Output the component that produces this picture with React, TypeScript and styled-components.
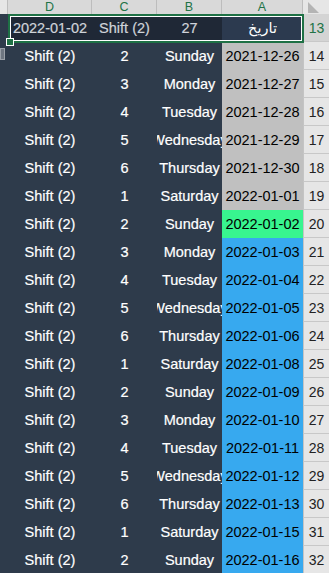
import * as React from 'react';
import styled, { createGlobalStyle } from 'styled-components';

const COLS = '8px 84px 65px 65px 81px 26px';

type Fill = 'past' | 'today' | 'future';

const rows: { n: number; shift: number; day: string; date: string; fill: Fill }[] = [
  { n: 14, shift: 2, day: 'Sunday', date: '2021-12-26', fill: 'past' },
  { n: 15, shift: 3, day: 'Monday', date: '2021-12-27', fill: 'past' },
  { n: 16, shift: 4, day: 'Tuesday', date: '2021-12-28', fill: 'past' },
  { n: 17, shift: 5, day: 'Wednesday', date: '2021-12-29', fill: 'past' },
  { n: 18, shift: 6, day: 'Thursday', date: '2021-12-30', fill: 'past' },
  { n: 19, shift: 1, day: 'Saturday', date: '2022-01-01', fill: 'past' },
  { n: 20, shift: 2, day: 'Sunday', date: '2022-01-02', fill: 'today' },
  { n: 21, shift: 3, day: 'Monday', date: '2022-01-03', fill: 'future' },
  { n: 22, shift: 4, day: 'Tuesday', date: '2022-01-04', fill: 'future' },
  { n: 23, shift: 5, day: 'Wednesday', date: '2022-01-05', fill: 'future' },
  { n: 24, shift: 6, day: 'Thursday', date: '2022-01-06', fill: 'future' },
  { n: 25, shift: 1, day: 'Saturday', date: '2022-01-08', fill: 'future' },
  { n: 26, shift: 2, day: 'Sunday', date: '2022-01-09', fill: 'future' },
  { n: 27, shift: 3, day: 'Monday', date: '2022-01-10', fill: 'future' },
  { n: 28, shift: 4, day: 'Tuesday', date: '2022-01-11', fill: 'future' },
  { n: 29, shift: 5, day: 'Wednesday', date: '2022-01-12', fill: 'future' },
  { n: 30, shift: 6, day: 'Thursday', date: '2022-01-13', fill: 'future' },
  { n: 31, shift: 1, day: 'Saturday', date: '2022-01-15', fill: 'future' },
  { n: 32, shift: 2, day: 'Sunday', date: '2022-01-16', fill: 'future' },
];

const fills: Record<Fill, string> = {
  past: '#c0c0c0',
  today: '#38f58f',
  future: '#37a9ef',
};

export default function App() {
  return (
    <>
      <GlobalStyle />
      <Sheet>
        <HeaderRow>
          <ColHead />
          <ColHead $active>D</ColHead>
          <ColHead $active>C</ColHead>
          <ColHead $active>B</ColHead>
          <ColHead $active>A</ColHead>
          <Corner>
            <svg width="26" height="14" viewBox="0 0 26 14">
              <polygon points="5,2 5,13 16,13" fill="#b4b4b4" />
            </svg>
          </Corner>
        </HeaderRow>

        <Row>
          <Cell />
          <Selection>
            <Cell $bg="#1f2836" $color="#cfd3d9">2022-01-02</Cell>
            <Cell $bg="#1f2836" $color="#cfd3d9">Shift (2)</Cell>
            <Cell $bg="#1f2836" $color="#cfd3d9">27</Cell>
            <Cell $bg="#2c3a4f" $color="#ffffff" $thin>
              تاريخ
            </Cell>
          </Selection>
          <RowNum $active>13</RowNum>
        </Row>

        {rows.map((r, i) => (
          <Row key={r.n}>
            <Cell>{i === 0 && <Marker />}</Cell>
            <Cell>Shift (2)</Cell>
            <Cell>{r.shift}</Cell>
            <Cell>{r.day}</Cell>
            <Cell $bg={fills[r.fill]} $color="#000" $thin>
              {r.date}
            </Cell>
            <RowNum>{r.n}</RowNum>
          </Row>
        ))}
      </Sheet>
    </>
  );
}

const GlobalStyle = createGlobalStyle`
  body {
    margin: 0;
    background: #2e3b4b;
    overflow: hidden;
  }
`;

const Sheet = styled.div`
  width: 329px;
  font-family: 'Liberation Sans', 'DejaVu Sans', sans-serif;
  font-size: 14.5px;
  background: #2e3b4b;
`;

const HeaderRow = styled.div`
  display: grid;
  grid-template-columns: ${COLS};
  height: 14px;
  background: #e6e6e6;
  border-bottom: 1px solid #c4c4c4;
  box-sizing: border-box;
`;

const ColHead = styled.div<{ $active?: boolean }>`
  display: flex;
  align-items: center;
  justify-content: center;
  background: ${(p) => (p.$active ? '#d9d9d9' : '#e6e6e6')};
  color: #217346;
  font-size: 12.5px;
  line-height: 14px;
  border-right: 1px solid #bdbdbd;
  overflow: hidden;
`;

const Corner = styled.div`
  background: #e6e6e6;
  display: flex;
`;

const Row = styled.div`
  display: grid;
  grid-template-columns: ${COLS};
  height: 28px;
`;

const Cell = styled.div<{ $bg?: string; $color?: string; $thin?: boolean }>`
  display: flex;
  align-items: center;
  justify-content: center;
  white-space: nowrap;
  overflow: hidden;
  background: ${(p) => p.$bg || '#2e3b4b'};
  color: ${(p) => p.$color || '#ffffff'};
  -webkit-text-stroke: ${(p) => (p.$thin ? '0' : '0.2px')} currentColor;
`;

const Selection = styled.div`
  grid-column: span 4;
  display: grid;
  grid-template-columns: 84px 65px 65px 81px;
  position: relative;

  &::after {
    content: '';
    position: absolute;
    inset: 0 -1px -1px 0;
    border: 2px solid #1e7145;
    box-shadow: inset 0 0 0 1px #ffffff;
    pointer-events: none;
  }

  &::before {
    content: '';
    position: absolute;
    left: -2px;
    bottom: -4px;
    width: 6px;
    height: 6px;
    background: #1e7145;
    border: 1px solid #ffffff;
    z-index: 1;
  }
`;

const RowNum = styled.div<{ $active?: boolean }>`
  display: flex;
  align-items: center;
  justify-content: center;
  background: ${(p) => (p.$active ? '#d4d4d4' : '#e6e6e6')};
  color: ${(p) => (p.$active ? '#217346' : '#222')};
  font-size: 14px;
  border-left: 1px solid #c4c4c4;
  border-bottom: 1px solid #c8c8c8;
  box-sizing: border-box;
`;

const Marker = styled.span`
  align-self: flex-start;
  margin: 6px 3px 0 0;
  width: 5px;
  height: 12px;
  background: #6e7681;
  border: 1px solid #9aa0a8;
  box-sizing: border-box;
`;
